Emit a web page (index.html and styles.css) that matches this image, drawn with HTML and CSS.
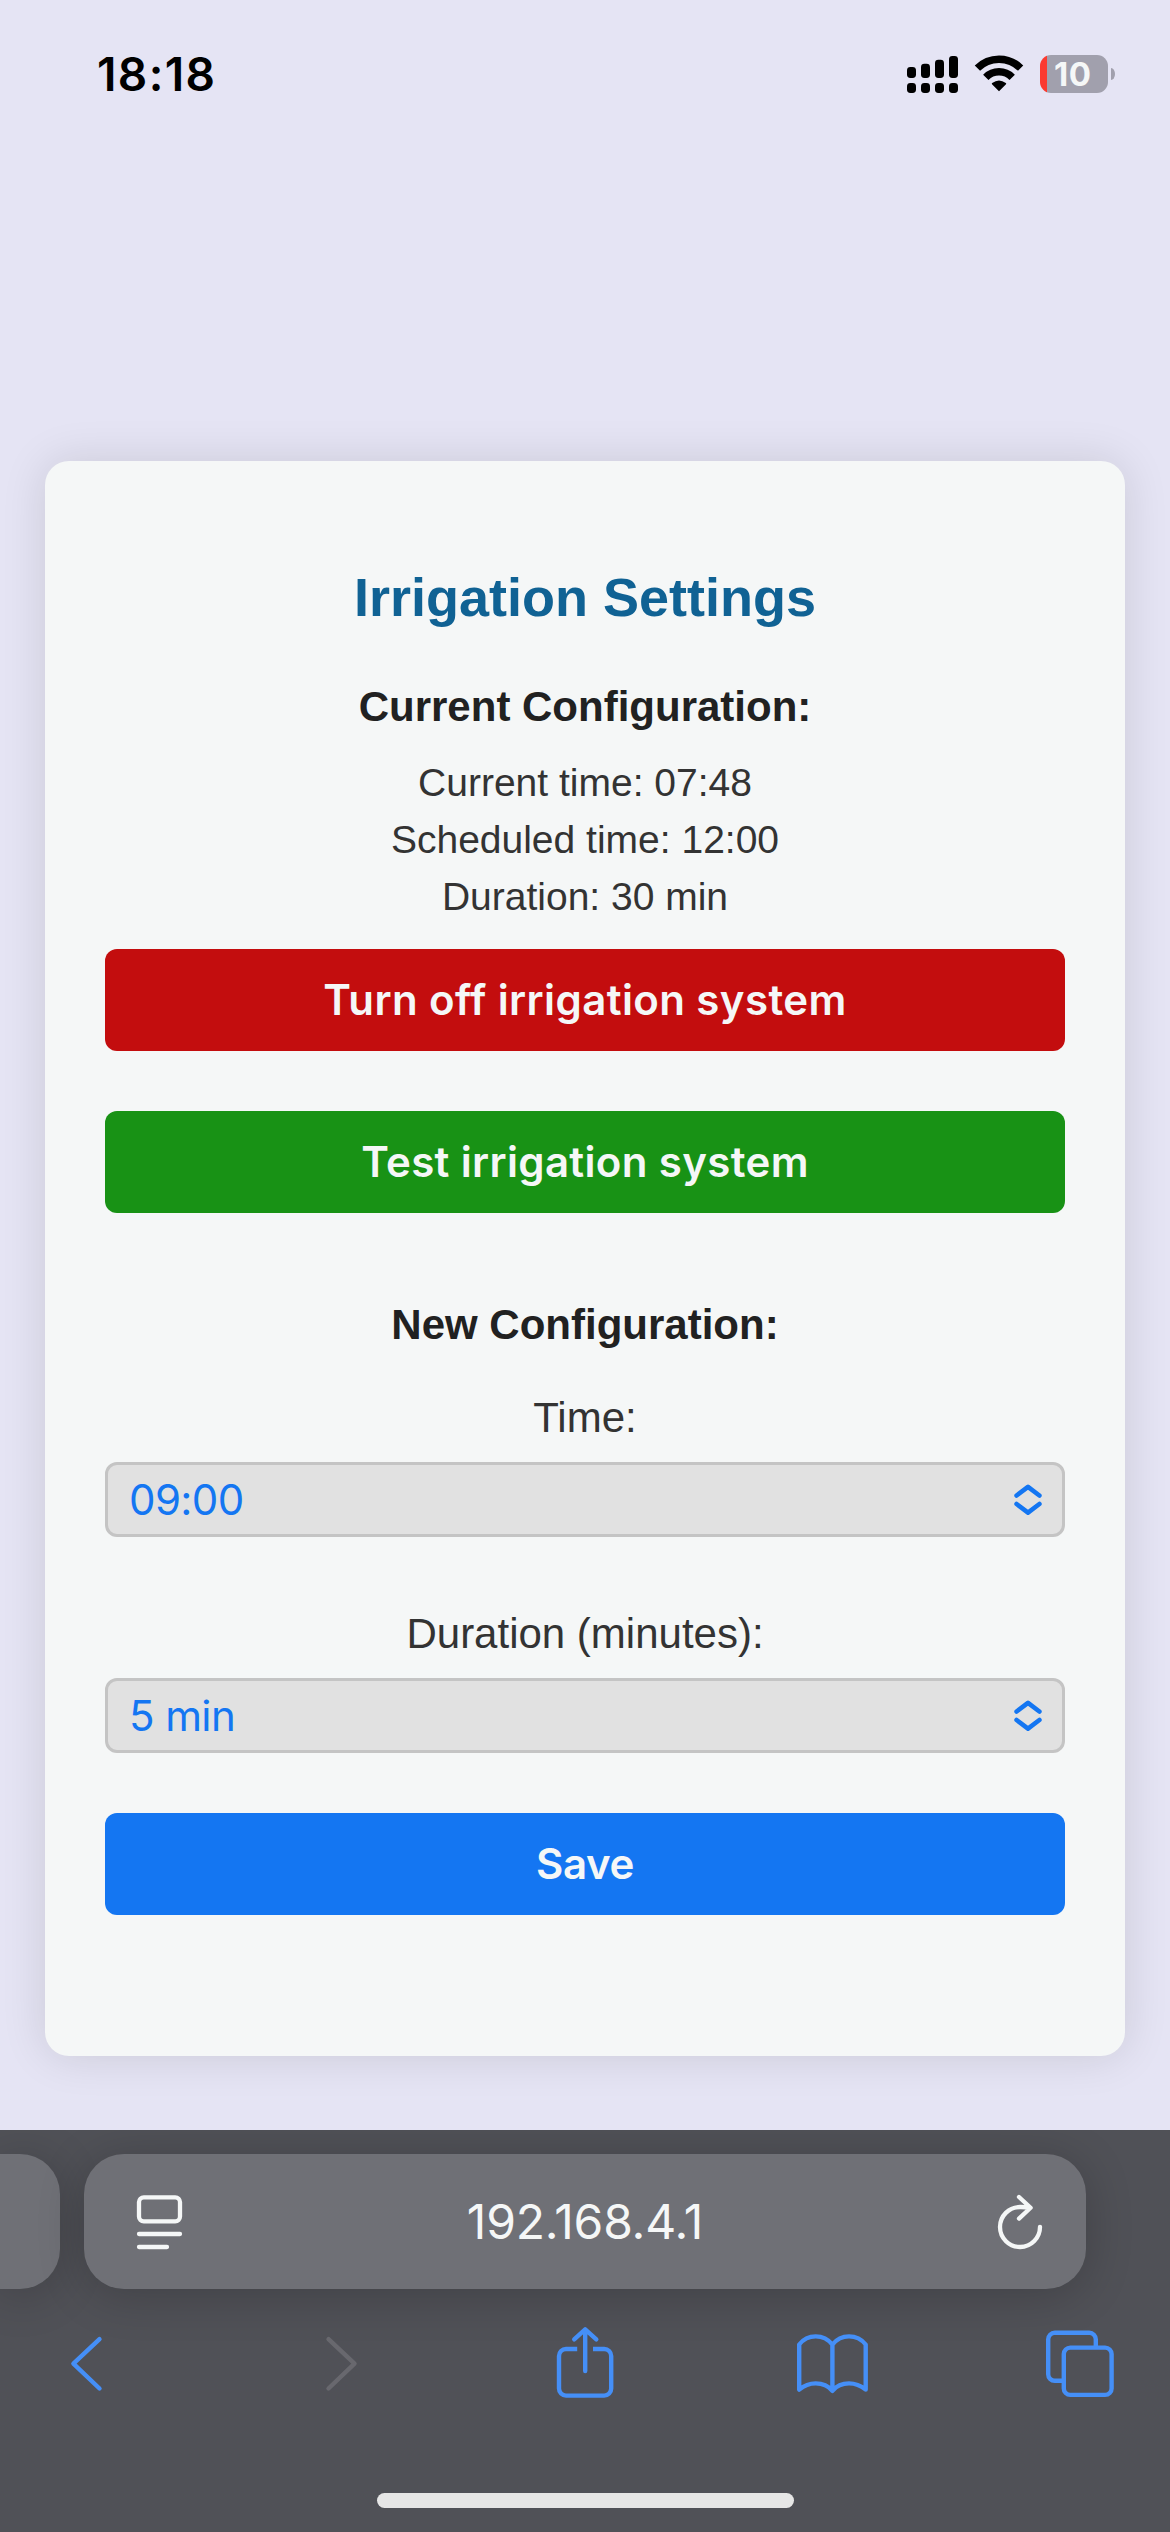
FILE: index.html
```html
<!DOCTYPE html>
<html lang="en">
<head>
<meta charset="utf-8">
<title>Irrigation Settings</title>
<link rel="stylesheet" href="styles.css">
</head>
<body>
<div class="screen">
  <header class="status">
    <span class="clock">18:18</span>
    <div class="indicators">
      <svg class="signal" width="51" height="38" viewBox="0 0 51 38">
        <rect x="0" y="12" width="9" height="11" rx="3.4"/><rect x="14" y="8.8" width="9" height="14.2" rx="3.4"/><rect x="28" y="4.8" width="9" height="18.2" rx="3.4"/><rect x="42" y="1" width="9" height="22" rx="3.4"/>
        <rect x="0" y="28" width="9" height="10" rx="3.4"/><rect x="14" y="28" width="9" height="10" rx="3.4"/><rect x="28" y="28" width="9" height="10" rx="3.4"/><rect x="42" y="28" width="9" height="10" rx="3.4"/>
      </svg>
      <svg class="wifi" width="48" height="38" viewBox="0 0 48 38">
        <path class="wifi-arc" d="M2.4 13.1A30.5 30.5 0 0 1 45.6 13.1M10.8 22.3A18.5 18.5 0 0 1 37.2 22.3"/>
        <path d="M24 36.2L17 29.3Q16.4 28.6 17.2 28Q24 22.8 30.8 28Q31.6 28.6 31 29.3Z"/>
      </svg>
      <div class="battery"><span class="battery-level">10</span></div>
      <span class="battery-tip"></span>
    </div>
  </header>

  <main class="page">
    <section class="card">
      <h1>Irrigation Settings</h1>
      <h2>Current Configuration:</h2>
      <div class="current">
        <p>Current time: 07:48</p>
        <p>Scheduled time: 12:00</p>
        <p>Duration: 30 min</p>
      </div>
      <button class="btn btn-off">Turn off irrigation system</button>
      <button class="btn btn-test">Test irrigation system</button>
      <h2 class="new-title">New Configuration:</h2>
      <label>Time:</label>
      <div class="select"><span>09:00</span>
        <svg width="28" height="32" viewBox="0 0 28 32"><path d="M2.6 11.5L14 2.8L25.4 11.5M2.6 20L14 28.7L25.4 20"/></svg>
      </div>
      <label class="second">Duration (minutes):</label>
      <div class="select"><span>5 min</span>
        <svg width="28" height="32" viewBox="0 0 28 32"><path d="M2.6 11.5L14 2.8L25.4 11.5M2.6 20L14 28.7L25.4 20"/></svg>
      </div>
      <button class="btn btn-save">Save</button>
    </section>
  </main>

  <footer class="browser">
    <div class="tabs">
      <div class="pill previous"></div>
      <div class="pill address">
        <svg width="45" height="54" viewBox="0 0 45 54"><rect x="2" y="2.3" width="41" height="24" rx="4.8"/><path d="M2 39H43M2 52H30"/></svg>
        <span class="url">192.168.4.1</span>
        <svg width="44" height="54" viewBox="0 0 44 54"><path d="M42 31.8A20 20 0 1 1 22 12Q27 11.9 31.5 12.8M21 2L32.6 12.8L21 23.6"/></svg>
      </div>
    </div>
    <nav class="toolbar">
      <svg width="72" height="80" viewBox="0 0 72 80"><path d="M49.5 14.2L23.4 38.7L49.5 63.5"/></svg>
      <svg class="disabled" width="72" height="80" viewBox="0 0 72 80"><path d="M30.5 14.2L56.5 38.7L30.5 63.5"/></svg>
      <svg width="72" height="80" viewBox="0 0 72 80"><path class="butt" d="M31.2 24H20a7 7 0 0 0-7 7V63.6a7 7 0 0 0 7 7H58.2a7 7 0 0 0 7-7V31a7 7 0 0 0-7-7H47"/><path d="M39.2 46V4.8M28.2 14.3L39.2 4.3L50.3 14.3"/></svg>
      <svg width="72" height="80" viewBox="0 0 72 80"><path d="M5.2 64.6V19.5C9 14.6 15 11.4 21.7 11.4S34.4 14.6 38.4 19.6C42.4 14.6 48.4 11.4 55 11.4S67.8 14.6 71.7 19.5V64.6C67 60.8 61 58.4 55 58.4S42.4 61 38.4 65.8C34.4 61 28 58.4 21.7 58.4S9.8 60.8 5.2 64.6ZM38.4 19.6V65"/></svg>
      <svg width="72" height="80" viewBox="0 0 72 80"><rect x="21.8" y="22.6" width="47.8" height="47.3" rx="6.5"/><path class="butt" d="M53.8 22V14.3a6.5 6.5 0 0 0-6.5-6.5H12.7a6.5 6.5 0 0 0-6.5 6.5V49.3a6.5 6.5 0 0 0 6.5 6.5H21"/></svg>
    </nav>
    <div class="home-indicator"></div>
  </footer>
</div>
</body>
</html>
```

FILE: styles.css
```css
* { box-sizing: border-box; }

body {
  margin: 0;
  background: #e5e4f4;
  font-family: "Liberation Sans", Arial, sans-serif;
  color: #333;
}

svg { display: block; overflow: visible; }

.screen {
  display: flex;
  flex-direction: column;
  width: 1170px;
  height: 2532px;
  overflow: hidden;
}

/* Status bar */
.status {
  display: flex;
  justify-content: space-between;
  align-items: flex-start;
  height: 150px;
  padding: 55px 55px 0 97px;
  font-family: Inter, sans-serif;
}

.clock {
  color: #000;
  font-size: 46px;
  font-weight: 600;
  line-height: 38px;
  letter-spacing: 1.4px;
}

.indicators { display: flex; align-items: center; }
.wifi { margin: 0 17px; }
.wifi-arc { fill: none; stroke: #000; stroke-width: 7.5; }

.battery {
  display: flex;
  align-items: center;
  width: 68px;
  height: 38px;
  padding-left: 14px;
  border-radius: 11px;
  background: linear-gradient(to right, #fb3a30 7px, #a1a0ad 7px);
}

.battery-level {
  color: #f5f7f7;
  font-size: 33px;
  font-weight: 700;
  line-height: 38px;
  letter-spacing: 0.6px;
}

.battery-tip {
  width: 4px;
  height: 12px;
  margin-left: 3px;
  border-radius: 0 4px 4px 0 / 0 6px 6px 0;
  background: #a1a0ad;
}

/* Settings card */
.page { height: 1980px; padding: 311px 45px 0; }

.card {
  display: flex;
  flex-direction: column;
  height: 1595px;
  padding: 106px 60px 0;
  border-radius: 24px;
  background: #f5f7f7;
  box-shadow: 0 0 45px rgba(0, 0, 0, 0.12);
  text-align: center;
}

h1, h2, p { margin: 0; }

h1 { color: #106294; font-size: 54px; line-height: 60px; }

h2 {
  margin-top: 56px;
  color: #212121;
  font-size: 42px;
  line-height: 48px;
}

.new-title { margin-top: 88px; }

.current { margin: 23px 0 24px; font-size: 39px; line-height: 57px; }

.btn {
  height: 102px;
  padding: 0;
  border: 0;
  border-radius: 12px;
  color: #f5f7f7;
  font: 600 42px/102px Inter, sans-serif;
}

.btn-off { background: #c30d0e; letter-spacing: 0.4px; }
.btn-test { margin-top: 60px; background: #189215; letter-spacing: 0.35px; }
.btn-save { margin-top: 60px; background: #1476f2; letter-spacing: -0.4px; }

label { margin-top: 45px; font-size: 42px; line-height: 48px; }
label.second { margin-top: 73px; }

.select {
  display: flex;
  justify-content: space-between;
  align-items: center;
  height: 75px;
  margin-top: 20px;
  padding: 0 20px 0 21px;
  border: 3px solid #c4c4c4;
  border-radius: 12px;
  background: #e1e1e1;
  color: #1476f2;
  font: 42px/69px Inter, sans-serif;
  letter-spacing: -0.6px;
}

.select svg { fill: none; stroke: #1476f2; stroke-width: 4.6; stroke-linecap: round; stroke-linejoin: round; }

/* Browser chrome */
.browser {
  display: flex;
  flex-direction: column;
  height: 402px;
  padding-top: 24px;
  background: #505157;
  overflow: hidden;
}

.tabs { display: flex; gap: 24px; }

.pill {
  height: 135px;
  background: #6f7076;
  box-shadow: 0 6px 48px rgba(0, 0, 0, 0.2);
}

.previous { width: 60px; border-radius: 0 40px 40px 0; }

.address {
  display: flex;
  justify-content: space-between;
  align-items: center;
  width: 1002px;
  padding: 0 44px 0 53px;
  border-radius: 40px;
}

.address svg {
  fill: none;
  stroke: #f5f7f7;
  stroke-width: 4.3;
  stroke-linecap: round;
  stroke-linejoin: round;
}

.url {
  margin-right: 10px;
  color: #f5f7f7;
  font: 48px/56px Inter, sans-serif;
  letter-spacing: -0.2px;
}

.toolbar { display: flex; justify-content: space-between; padding: 36px 56px 0 50px; }

.toolbar svg {
  fill: none;
  stroke: #458ff7;
  stroke-width: 4.4;
  stroke-linecap: round;
  stroke-linejoin: round;
}

.toolbar .disabled { stroke: #68686e; }
.toolbar .butt { stroke-linecap: butt; }

.home-indicator {
  align-self: center;
  width: 417px;
  height: 15px;
  margin-top: 88px;
  border-radius: 8px;
  background: #e6e6e6;
}
```
